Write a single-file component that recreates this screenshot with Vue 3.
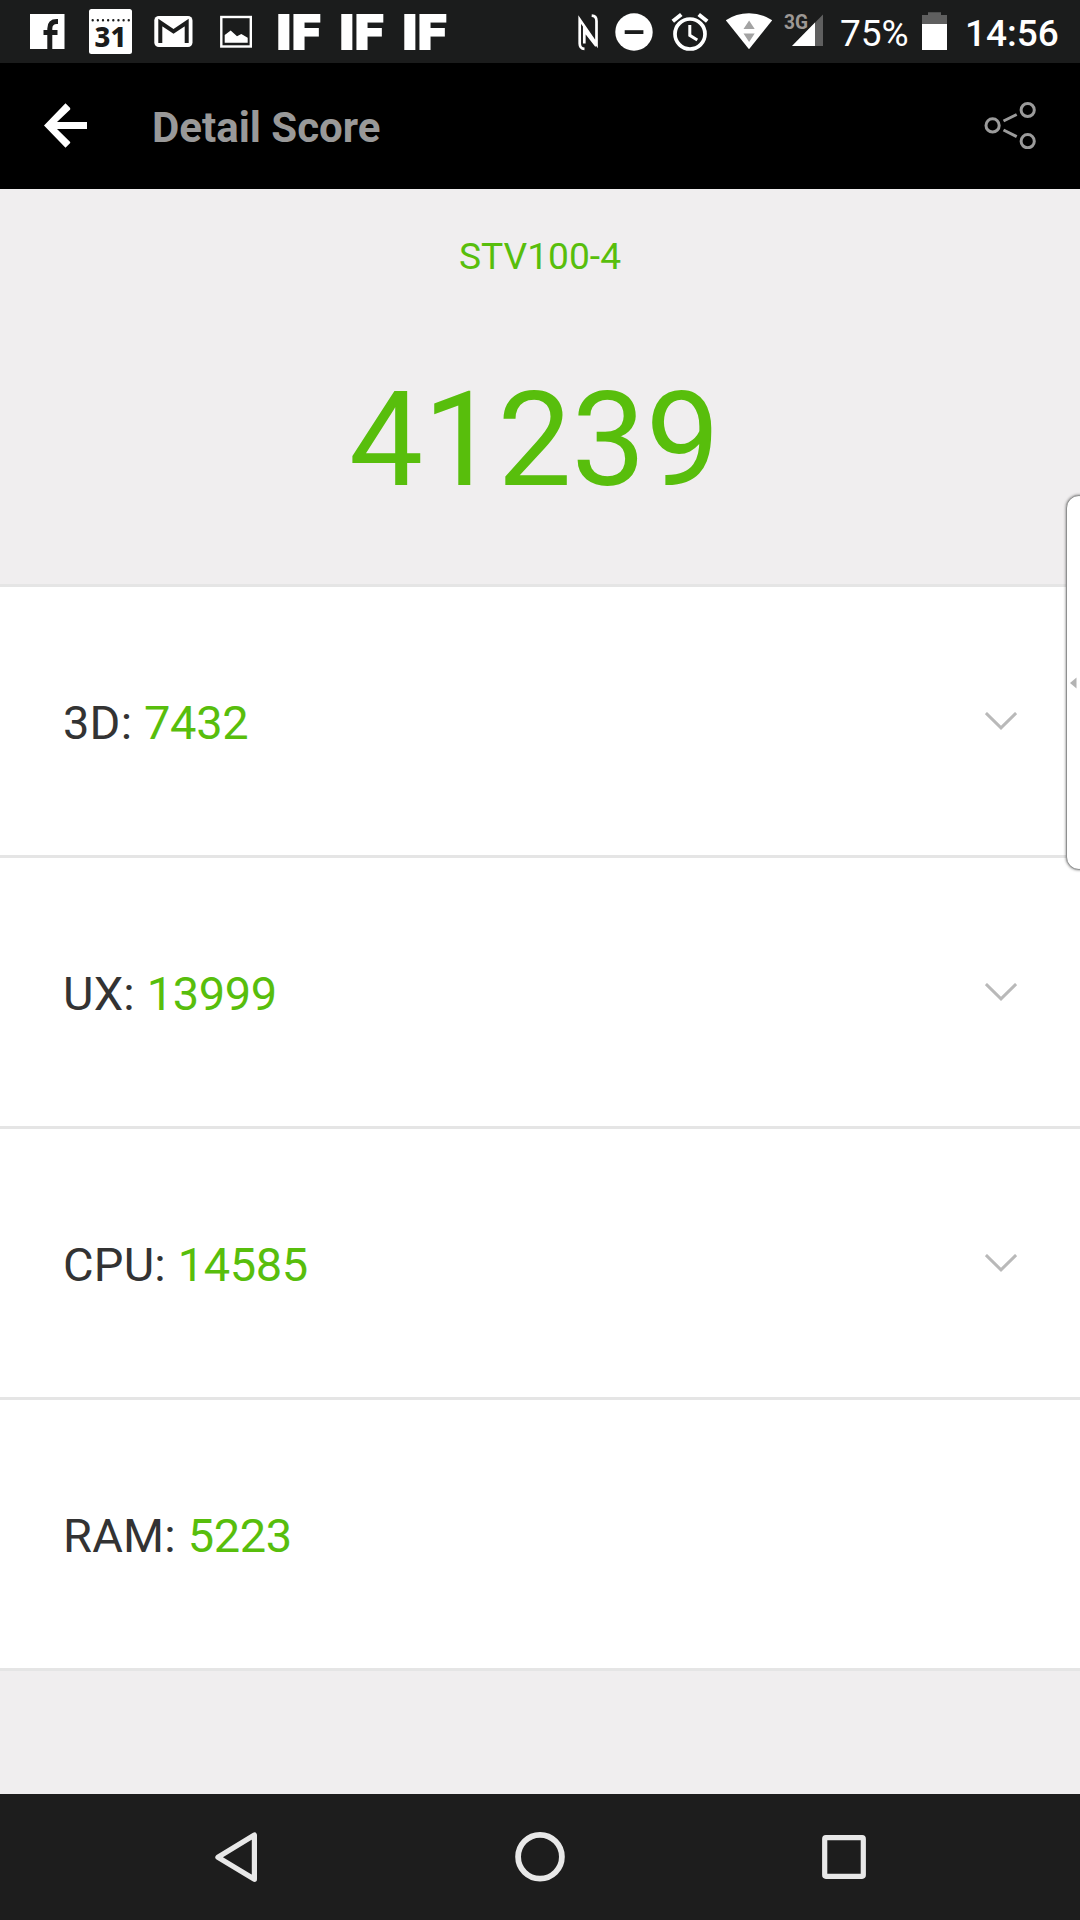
<template>
  <div class="screen">
    <div class="status-bar">
      <div class="notifications">
        <!-- facebook -->
        <svg width="63" height="63" viewBox="0 0 63 63">
          <rect x="14" y="14" width="34.5" height="35" fill="#fff" />
          <path d="M33.8 49V28.5q0-7 7-7h1.2M27.5 32.5H41.5" fill="none" stroke="#1b1c1c" stroke-width="5" />
        </svg>
        <!-- calendar -->
        <svg width="63" height="63" viewBox="0 0 63 63">
          <rect x="10" y="9" width="43" height="45" rx="2.5" fill="#fff" />
          <path d="M13.7 20.3H52" stroke="#1b1c1c" stroke-width="2.4" stroke-linecap="round" stroke-dasharray="0 5.15" />
          <text x="31.5" y="47.3" class="calendar-day" text-anchor="middle">31</text>
        </svg>
        <!-- mail -->
        <svg width="63" height="63" viewBox="0 0 63 63">
          <rect x="12.3" y="16" width="38.2" height="31" rx="4.5" fill="#fff" />
          <path d="M18.3 43V22.5L31.5 31.3L44.7 22.5V43" fill="none" stroke="#1b1c1c" stroke-width="4" />
        </svg>
        <!-- picture -->
        <svg width="63" height="63" viewBox="0 0 63 63">
          <rect x="16.3" y="17" width="29.5" height="29.5" fill="none" stroke="#fff" stroke-width="2.4" />
          <path d="M19.7 42.7V35l6-4.4 6.3 5.7 4.3-2.2 6.4 3.7v4.9z" fill="#fff" />
        </svg>
        <svg v-for="n in 3" :key="n" width="63" height="63" viewBox="0 0 63 63">
          <text x="8" y="48.7" class="if-mark" textLength="44" lengthAdjust="spacingAndGlyphs">IF</text>
        </svg>
      </div>

      <div class="system-icons">
        <!-- nfc -->
        <svg width="38" height="63" viewBox="570 0 38 63">
          <path d="M584.5 48.8q-4.8-.2-4.8-5.3V19.5L596.5 44V21q0-5-4.8-5.3M584.3 43.5V30.5L596.3 46" fill="none" stroke="#fff" stroke-width="2.7" />
        </svg>
        <!-- do not disturb -->
        <svg width="54" height="63" viewBox="608 0 54 63">
          <circle cx="634" cy="32" r="18.7" fill="#fff" />
          <rect x="624.7" y="30.2" width="18.7" height="3.8" fill="#1b1c1c" />
        </svg>
        <!-- alarm -->
        <svg width="55" height="63" viewBox="662 0 55 63">
          <circle cx="690" cy="34" r="15" fill="none" stroke="#fff" stroke-width="3.7" />
          <path d="M689.8 25V35.3L697.3 40" fill="none" stroke="#fff" stroke-width="3" />
          <path d="M672.8 21.3L681.3 14.5M698.7 14.5L707.2 21.3" stroke="#fff" stroke-width="4" />
        </svg>
        <!-- wifi -->
        <svg width="63" height="63" viewBox="717 0 63 63">
          <path d="M749 49.3L725.8 20.3Q736 13.2 749 13.2T772.2 20.3z" fill="#fff" />
          <path d="M743.5 29H754.7L749.1 20.5zM743.5 33.5H754.7L749.1 42z" fill="#a3a3a3" />
        </svg>
        <!-- mobile signal -->
        <svg width="52" height="63" viewBox="780 0 52 63">
          <path d="M792 46L823 14.5V46z" fill="#5f5f5f" />
          <path d="M792 46L815 22.5V46z" fill="#fff" />
          <text x="784" y="29" class="network" textLength="24" lengthAdjust="spacingAndGlyphs">3G</text>
        </svg>
        <span class="battery-level">75%</span>
        <!-- battery -->
        <svg width="40" height="63" viewBox="915 0 40 63">
          <path d="M922 24V15H928V12.3H941V15H947V24z" fill="#5f5f5f" />
          <rect x="922" y="24" width="25" height="26" fill="#fff" />
        </svg>
        <span class="clock">14:56</span>
      </div>
    </div>

    <header class="app-bar">
      <svg class="back" width="43" height="45" viewBox="44 103 43 45">
        <path d="M65.5 103.3L70.2 108V109.5L57 122H87V129H57L70.2 142V143L65.5 147.7L44 125.5z" fill="#fff" />
      </svg>
      <h1>Detail Score</h1>
      <svg class="share" width="52" height="48" viewBox="984 101 52 48">
        <g fill="none" stroke="#9b9b9b" stroke-width="3">
          <circle cx="992.6" cy="125.4" r="6.6" />
          <circle cx="1027.7" cy="110" r="6.6" />
          <circle cx="1027.7" cy="141.2" r="6.6" />
          <path d="M1003.5 121L1016.7 114.5M1003.5 130L1016.7 136.7" />
        </g>
      </svg>
    </header>

    <section class="summary">
      <div class="device">{{ device }}</div>
      <div class="total">{{ total }}</div>
    </section>

    <main class="scores">
      <div v-for="item in scores" :key="item.label" class="score-row">
        <div class="score-text">
          <span class="label">{{ item.label }}: </span><span class="value">{{ item.value }}</span>
        </div>
        <svg v-if="item.expandable" class="chevron" width="32" height="18" viewBox="0 0 32 18">
          <path d="M.9 1L16 15.8L31.1 1" fill="none" stroke="#b9b9b9" stroke-width="3" />
        </svg>
      </div>
    </main>

    <nav class="nav-bar">
      <svg width="50" height="60" viewBox="211 1827 50 60">
        <path d="M217.9 1857.3L254.4 1835V1879.3z" fill="none" stroke="#e8e8e8" stroke-width="5.2" stroke-linejoin="round" />
      </svg>
      <svg width="60" height="60" viewBox="510 1827 60 60">
        <circle cx="540" cy="1856.8" r="21.9" fill="none" stroke="#e8e8e8" stroke-width="5.8" />
      </svg>
      <svg width="50" height="60" viewBox="819 1827 50 60">
        <rect x="824.7" y="1837.7" width="38.6" height="38.6" rx="1.2" fill="none" stroke="#e8e8e8" stroke-width="5.2" />
      </svg>
    </nav>

    <!-- edge panel handle, floats over the list -->
    <div class="edge-panel">
      <svg width="7" height="12" viewBox="0 0 7 12">
        <path d="M0 6L6.5 .5V11.5z" fill="#b3b3b3" />
      </svg>
    </div>
  </div>
</template>

<script setup>
import { ref } from 'vue'

const device = ref('STV100-4')
const total = ref(41239)

const scores = ref([
  { label: '3D', value: 7432, expandable: true },
  { label: 'UX', value: 13999, expandable: true },
  { label: 'CPU', value: 14585, expandable: true },
  { label: 'RAM', value: 5223, expandable: false }
])
</script>

<style>
body {
  margin: 0;
}
</style>

<style scoped>
.screen {
  position: relative;
  display: flex;
  flex-direction: column;
  width: 1080px;
  height: 1920px;
  overflow: hidden;
  background: #f0eeef;
  font-family: Roboto, sans-serif;
}

svg {
  display: block;
  flex-shrink: 0;
}

.status-bar {
  display: flex;
  justify-content: space-between;
  height: 63px;
  padding-left: 16px;
  background: #1b1c1c;
  color: #fff;
}

.notifications {
  display: flex;
}

.calendar-day {
  font-family: "Noto Sans", sans-serif;
  font-size: 27.5px;
  font-weight: 800;
  fill: #1b1c1c;
}

.if-mark {
  font-size: 49px;
  font-weight: 900;
  fill: #fff;
  stroke: #fff;
  stroke-width: 2px;
}

.system-icons {
  display: flex;
  width: 510px;
}

.network {
  font-size: 21px;
  font-weight: 700;
  fill: #9d9895;
}

.battery-level {
  box-sizing: border-box;
  width: 83px;
  padding-left: 8px;
  font-size: 37px;
  line-height: 67px;
  white-space: nowrap;
}

.clock {
  padding-left: 10px;
  font-size: 37px;
  font-weight: 500;
  line-height: 67px;
}

.app-bar {
  display: flex;
  align-items: center;
  height: 126px;
  padding: 0 44px;
  background: #000;
}

.back {
  margin-bottom: 1px;
}

.app-bar h1 {
  margin: 4px 0 0 65px;
  font-size: 42px;
  font-weight: 700;
  line-height: 50px;
  color: #999;
}

.share {
  margin: 0 0 2px auto;
}

.summary {
  box-sizing: border-box;
  height: 398px;
  padding-top: 42px;
  border-bottom: 3px solid #e5e5e5;
  color: #58be0c;
  text-align: center;
}

.device {
  font-size: 37.2px;
  line-height: 50px;
}

.total {
  margin-top: 82px;
  padding-right: 11px;
  font-size: 132px;
  line-height: 155px;
}

.scores {
  display: flex;
  flex-direction: column;
}

.score-row {
  display: flex;
  align-items: center;
  justify-content: space-between;
  height: 268px;
  padding: 0 63px;
  border-bottom: 3px solid #e5e5e5;
  background: #fff;
}

.score-text {
  padding-top: 3px;
  font-size: 47px;
  white-space: pre;
}

.label {
  letter-spacing: 0.2px;
  color: #333;
}

.value {
  letter-spacing: -0.4px;
  color: #58be0c;
}

.chevron {
  margin-top: -1px;
}

.nav-bar {
  display: flex;
  align-items: center;
  justify-content: space-between;
  height: 126px;
  margin-top: auto;
  padding: 0 211px;
  background: #1d1d1d;
}

.edge-panel {
  position: absolute;
  top: 495px;
  right: -12px;
  display: flex;
  align-items: center;
  box-sizing: border-box;
  width: 26px;
  height: 375px;
  padding-left: 3px;
  border: 1px solid #8f9090;
  border-radius: 13px;
  background: #fff;
  box-shadow: 0 0 3px rgba(0, 0, 0, 0.55);
}
</style>
